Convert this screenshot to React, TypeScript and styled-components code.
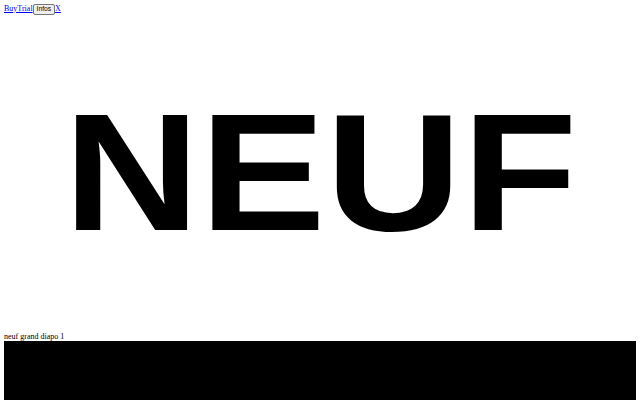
import React from "react";
import styled, { createGlobalStyle } from "styled-components";

const GlobalStyle = createGlobalStyle`
  body {
    margin: 4px 4px 0;
    font-family: "Liberation Serif", "Times New Roman", serif;
    font-size: 8px;
    background: #fff;
    color: #000;
    overflow: hidden;
  }
`;

function App() {
  return (
    <>
      <GlobalStyle />
      <TopBar>
        <Link href="#">BuyTrial</Link>
        <InfoButton type="button">Infos</InfoButton>
        <Link href="#">X</Link>
      </TopBar>
      <Title>
        <TitleText>NEUF</TitleText>
      </Title>
      <Caption>neuf grand diapo 1</Caption>
      <Slide />
    </>
  );
}

export default App;

const TopBar = styled.div`
  display: flex;
  align-items: center;
  height: 10px;
  line-height: 10px;
`;

const Link = styled.a`
  color: #0000ee;
  text-decoration: underline;
`;

const InfoButton = styled.button`
  font-family: "Liberation Sans", Arial, sans-serif;
  font-size: 6.7px;
  line-height: 8px;
  height: 11px;
  padding: 0 3px;
  margin: 0;
  background: #efefef;
  border: 1px solid #767676;
  border-radius: 2px;
  color: #000;
`;

const Title = styled.h1`
  margin: 73px 0 0;
  text-align: center;
  font-family: "Liberation Sans", Arial, sans-serif;
  font-weight: 700;
  font-size: 167px;
  line-height: 170px;
`;

const TitleText = styled.span`
  display: inline-block;
  transform: scaleX(1.13);
  transform-origin: center;
`;

const Caption = styled.div`
  margin-top: 75px;
  height: 9px;
  line-height: 9px;
`;

const Slide = styled.div`
  height: 59px;
  background: #000;
`;
